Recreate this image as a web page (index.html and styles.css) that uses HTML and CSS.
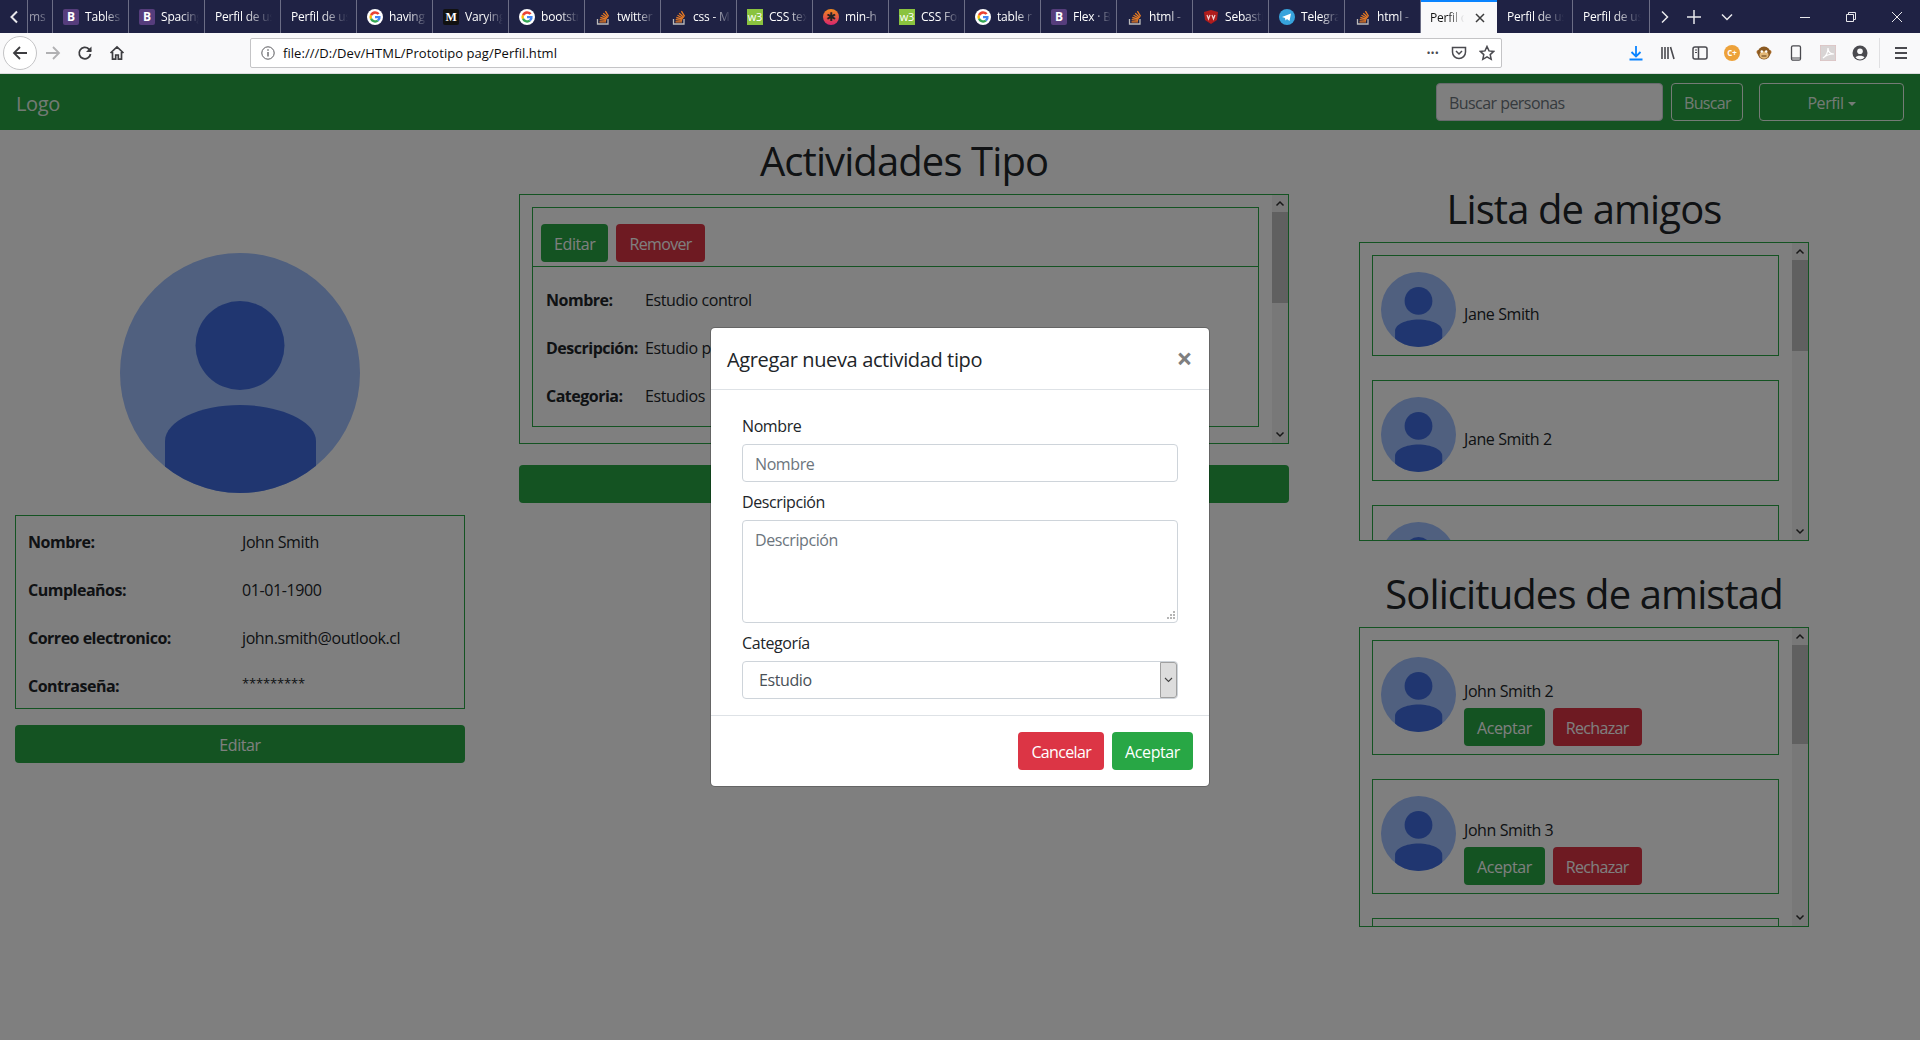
FILE: index.html
```html
<!DOCTYPE html>
<html lang="es">
<head>
    <meta charset="UTF-8">
    <title>Perfil de usuario</title>
    <link rel="stylesheet" href="styles.css">
</head>
<body>
    <svg class="svg-defs" aria-hidden="true">
        <defs>
            <clipPath id="avatar-clip"><circle cx="120" cy="120" r="120"/></clipPath>
            <symbol id="avatar" viewBox="0 0 240 240">
                <circle cx="120" cy="120" r="120" fill="#a0c0ff"/>
                <circle cx="120" cy="92.5" r="44.5" fill="#406de0"/>
                <path clip-path="url(#avatar-clip)" fill="#406de0" d="M45 240V188C45 168 80 152 120 152S196 168 196 188V240Z"/>
            </symbol>
            <symbol id="ic-g" viewBox="0 0 16 16">
                <circle cx="8" cy="8" r="8" fill="#fff"/>
                <path d="M12.6 4.6A5.7 5.7 0 0 0 3 5.4l2 1.5a3.3 3.3 0 0 1 5.4-1.1z" fill="#ea4335"/>
                <path d="M3 5.4a5.7 5.7 0 0 0 0 5.2l2-1.5a3.3 3.3 0 0 1 0-2.2z" fill="#fbbc05"/>
                <path d="M3 10.6a5.7 5.7 0 0 0 8.8 1.6l-1.9-1.5A3.3 3.3 0 0 1 5 9.1z" fill="#34a853"/>
                <path d="M13.6 7H8v2.3h3.2a2.8 2.8 0 0 1-1.3 1.4l1.9 1.5A5.6 5.6 0 0 0 13.6 7z" fill="#4285f4"/>
            </symbol>
            <symbol id="ic-so" viewBox="0 0 16 16">
                <path d="M2.5 10v5h10.5v-5" fill="none" stroke="#bcbbbb" stroke-width="1.3"/>
                <path d="M4.5 12.8h6.5M4.7 10.7l6.4.6M5.3 8.5l6.2 1.6M6.5 6.3l5.6 3M8.2 4.2l4.7 4.3M10.4 2.2l3.2 5.2" fill="none" stroke="#e87a23" stroke-width="1.3"/>
            </symbol>
        </defs>
    </svg>

    <div class="browser">
        <div class="tabstrip">
            <span class="strip-btn strip-btn-left">
                <svg width="10" height="14" viewBox="0 0 10 14"><path d="M8 1.5L2.5 7 8 12.5" fill="none" stroke="#e8e8ec" stroke-width="2"/></svg>
            </span>
            <div class="tab tab-cut"><span class="tab-title">ms</span></div>
            <div class="tab"><span class="fav fav-b">B</span><span class="tab-title">Tables</span></div>
            <div class="tab"><span class="fav fav-b">B</span><span class="tab-title">Spacing</span></div>
            <div class="tab"><span class="tab-title">Perfil de usuario</span></div>
            <div class="tab"><span class="tab-title">Perfil de usuario</span></div>
            <div class="tab"><svg class="fav"><use href="#ic-g"/></svg><span class="tab-title">having</span></div>
            <div class="tab"><span class="fav fav-m">M</span><span class="tab-title">Varying</span></div>
            <div class="tab"><svg class="fav"><use href="#ic-g"/></svg><span class="tab-title">bootstrap</span></div>
            <div class="tab"><svg class="fav"><use href="#ic-so"/></svg><span class="tab-title">twitter</span></div>
            <div class="tab"><svg class="fav"><use href="#ic-so"/></svg><span class="tab-title">css - Ma</span></div>
            <div class="tab"><span class="fav fav-w3">w3</span><span class="tab-title">CSS text</span></div>
            <div class="tab"><span class="fav fav-min">✱</span><span class="tab-title">min-h</span></div>
            <div class="tab"><span class="fav fav-w3">w3</span><span class="tab-title">CSS Fonts</span></div>
            <div class="tab"><svg class="fav"><use href="#ic-g"/></svg><span class="tab-title">table r</span></div>
            <div class="tab"><span class="fav fav-b">B</span><span class="tab-title">Flex · Bo</span></div>
            <div class="tab"><svg class="fav"><use href="#ic-so"/></svg><span class="tab-title">html - </span></div>
            <div class="tab"><svg class="fav" viewBox="0 0 16 16"><path d="M1 3l7-2 7 2-1 8-6 4-6-4z" fill="#b01c1c"/><path d="M4 6l1.500 4L7 6M9 6l1.500 4L12 6" fill="none" stroke="#f0d0d0" stroke-width="1.200"/></svg><span class="tab-title">Sebastian</span></div>
            <div class="tab"><svg class="fav" viewBox="0 0 16 16"><circle cx="8" cy="8" r="8" fill="#37a3dc"/><path d="M3 8l9-3.500-1.500 7.500-2.500-2-1.500 1.500-.5-2.500z" fill="#fff"/></svg><span class="tab-title">Telegram</span></div>
            <div class="tab"><svg class="fav"><use href="#ic-so"/></svg><span class="tab-title">html - </span></div>
            <div class="tab tab-active"><span class="tab-title">Perfil de usuario</span>
                <svg class="tab-close" width="10" height="10" viewBox="0 0 10 10"><path d="M1 1l8 8M9 1L1 9" stroke="#3c3c3c" stroke-width="1.500"/></svg>
            </div>
            <div class="tab"><span class="tab-title">Perfil de usuario</span></div>
            <div class="tab tab-last"><span class="tab-title">Perfil de usuario</span></div>
            <span class="strip-btn strip-btn-right">
                <svg width="10" height="14" viewBox="0 0 10 14"><path d="M2 1.500L7.500 7 2 12.500" fill="none" stroke="#e8e8ec" stroke-width="1.500"/></svg>
            </span>
            <span class="strip-btn strip-btn-new">
                <svg width="14" height="14" viewBox="0 0 14 14"><path d="M7 0v14M0 7h14" stroke="#e8e8ec" stroke-width="1.500"/></svg>
            </span>
            <span class="strip-btn strip-btn-list">
                <svg width="12" height="8" viewBox="0 0 12 8"><path d="M1 1.500L6 6.500l5-5" fill="none" stroke="#e8e8ec" stroke-width="1.500"/></svg>
            </span>
            <div class="win-controls">
                <svg width="10" height="10" viewBox="0 0 10 10"><path d="M0 5.500h10" stroke="#e8e8ec"/></svg>
                <svg width="10" height="10" viewBox="0 0 10 10"><path d="M.5 2.500h7v7h-7zM2.500 2.500v-2h7v7h-2" fill="none" stroke="#e8e8ec"/></svg>
                <svg width="10" height="10" viewBox="0 0 10 10"><path d="M0 0l10 10M10 0L0 10" stroke="#e8e8ec"/></svg>
            </div>
        </div>

        <div class="toolbar">
            <span class="back-btn">
                <svg width="16" height="16" viewBox="0 0 16 16"><path d="M15 8H2M8 2L2 8l6 6" fill="none" stroke="#3d3d40" stroke-width="1.800"/></svg>
            </span>
            <svg class="tool-ic tool-forward" viewBox="0 0 16 16"><path d="M1 8h13M8 2l6 6-6 6" fill="none" stroke="#b1b1b3" stroke-width="1.800"/></svg>
            <svg class="tool-ic tool-reload" viewBox="0 0 16 16"><path d="M13.500 9a5.700 5.700 0 1 1-1.700-5L14 6" fill="none" stroke="#3d3d40" stroke-width="1.800"/><path d="M14.500 1.500v5.500H9z" fill="#3d3d40"/></svg>
            <svg class="tool-ic tool-home" viewBox="0 0 16 16"><path d="M1.500 8L8 1.800 14.500 8M3.500 7v7.200h3.200V10h2.600v4.200h3.200V7" fill="none" stroke="#3d3d40" stroke-width="1.700"/></svg>
            <div class="urlbar">
                <svg class="url-info" viewBox="0 0 14 14"><circle cx="7" cy="7" r="6.200" fill="none" stroke="#5a5a5e"/><path d="M7 6v4.500M7 3.200v1.600" stroke="#5a5a5e" stroke-width="1.300"/></svg>
                <span class="url-text">file:///D:/Dev/HTML/Prototipo pag/Perfil.html</span>
                <span class="url-dots">•••</span>
                <svg class="tool-ic" viewBox="0 0 16 16"><path d="M1.500 2.500h13V7a6.500 6.500 0 0 1-13 0z" fill="none" stroke="#4a4a4f" stroke-width="1.500"/><path d="M5 6l3 3 3-3" fill="none" stroke="#4a4a4f" stroke-width="1.500"/></svg>
                <svg class="tool-ic url-star" viewBox="0 0 16 16"><path d="M8 1.500l2 4.400 4.700.5-3.500 3.200 1 4.700L8 11.900l-4.200 2.400 1-4.700L1.300 6.400 6 5.900z" fill="none" stroke="#4a4a4f" stroke-width="1.500"/></svg>
            </div>
            <div class="tool-right">
                <svg class="tool-ic" viewBox="0 0 16 16"><path d="M8 1v10M3.500 7L8 11.500 12.500 7M1.500 14.500h13" fill="none" stroke="#0a84ff" stroke-width="1.800"/></svg>
                <svg class="tool-ic" viewBox="0 0 16 16"><path d="M2 2v12M5 2v12M8 2v12M10.500 2l3.500 12" fill="none" stroke="#4a4a4f" stroke-width="1.600"/></svg>
                <svg class="tool-ic" viewBox="0 0 16 16"><rect x="1" y="2" width="14" height="12" rx="2" fill="none" stroke="#4a4a4f" stroke-width="1.500"/><path d="M6.500 2v12" stroke="#4a4a4f" stroke-width="1.500"/><path d="M3 5h2M3 7.500h2" stroke="#4a4a4f"/></svg>
                <span class="ext-cplus">C+</span>
                <svg class="tool-ic" viewBox="0 0 16 16"><circle cx="2.500" cy="7" r="2" fill="#b0702c"/><circle cx="13.500" cy="7" r="2" fill="#b0702c"/><circle cx="8" cy="8" r="6.500" fill="#8b5a22"/><ellipse cx="8" cy="10" rx="4.500" ry="3.800" fill="#e3b878"/><circle cx="5.800" cy="6.500" r="1.200" fill="#fff"/><circle cx="10.200" cy="6.500" r="1.200" fill="#fff"/><path d="M5.500 11h5" stroke="#5a3510"/></svg>
                <svg class="tool-ic" viewBox="0 0 16 16"><rect x="3.500" y=".8" width="9" height="14.400" rx="1.500" fill="none" stroke="#4a4a4f" stroke-width="1.300"/><path d="M3.500 13h9" stroke="#4a4a4f"/></svg>
                <svg class="tool-ic" viewBox="0 0 16 16"><rect width="16" height="16" fill="#d8d4d4" stroke="#e0bcbc"/><path d="M3 13c3-2 5-6 5-10 0 4 2 6 6 6-4 0-8 1-11 4z" fill="none" stroke="#fff" stroke-width="1.200"/></svg>
                <svg class="tool-ic" viewBox="0 0 16 16"><circle cx="8" cy="8" r="7.500" fill="#4a4a4f"/><circle cx="8" cy="6.300" r="2.800" fill="#f9f9fa"/><path d="M3.500 12.500c1-2.500 8-2.500 9 0a6 6 0 0 1-9 0z" fill="#f9f9fa"/></svg>
                <span class="tool-sep"></span>
                <svg class="tool-ic" viewBox="0 0 16 16"><path d="M2 3h12M2 8h12M2 13h12" stroke="#4a4a4f" stroke-width="1.800"/></svg>
            </div>
        </div>

        <div class="page">
            <nav class="navbar">
                <a class="brand">Logo</a>
                <input class="search-input" type="text" placeholder="Buscar personas">
                <button class="btn btn-ghost btn-search">Buscar</button>
                <button class="btn btn-ghost btn-profile">Perfil<span class="caret"></span></button>
            </nav>

            <div class="columns">
                <section class="col-left">
                    <svg class="avatar-big"><use href="#avatar"/></svg>
                    <div class="info-box">
                        <div class="info-row"><b>Nombre:</b><span>John Smith</span></div>
                        <div class="info-row"><b>Cumpleaños:</b><span>01-01-1900</span></div>
                        <div class="info-row"><b>Correo electronico:</b><span>john.smith@outlook.cl</span></div>
                        <div class="info-row"><b>Contraseña:</b><span class="info-pass">*********</span></div>
                    </div>
                    <button class="btn btn-green btn-wide">Editar</button>
                </section>

                <section class="col-center">
                    <h1>Actividades Tipo</h1>
                    <div class="scroll-box activity-box">
                        <div class="scroll-list">
                            <div class="activity">
                                <div class="activity-head">
                                    <button class="btn btn-green">Editar</button>
                                    <button class="btn btn-red">Remover</button>
                                </div>
                                <div class="activity-row"><b>Nombre:</b><span>Estudio control</span></div>
                                <div class="activity-row"><b>Descripción:</b><span>Estudio para control</span></div>
                                <div class="activity-row"><b>Categoria:</b><span>Estudios</span></div>
                            </div>
                        </div>
                        <div class="scrollbar">
                            <svg class="sb-arrow" viewBox="0 0 16 16"><path d="M4.500 10L8 6.500l3.500 3.500" fill="none" stroke="#303030" stroke-width="1.500"/></svg>
                            <div class="sb-track"><div class="sb-thumb thumb-activity"></div></div>
                            <svg class="sb-arrow" viewBox="0 0 16 16"><path d="M4.500 6L8 9.500 11.500 6" fill="none" stroke="#303030" stroke-width="1.500"/></svg>
                        </div>
                    </div>
                    <button class="btn btn-green btn-wide"></button>
                </section>

                <section class="col-right">
                    <h1>Lista de amigos</h1>
                    <div class="scroll-box friends-box">
                        <div class="scroll-list">
                            <div class="person">
                                <svg class="avatar-small"><use href="#avatar"/></svg>
                                <div class="friend-name">Jane Smith</div>
                            </div>
                            <div class="person">
                                <svg class="avatar-small"><use href="#avatar"/></svg>
                                <div class="friend-name">Jane Smith 2</div>
                            </div>
                            <div class="person">
                                <svg class="avatar-small"><use href="#avatar"/></svg>
                            </div>
                        </div>
                        <div class="scrollbar">
                            <svg class="sb-arrow" viewBox="0 0 16 16"><path d="M4.500 10L8 6.500l3.500 3.500" fill="none" stroke="#303030" stroke-width="1.500"/></svg>
                            <div class="sb-track"><div class="sb-thumb thumb-friends"></div></div>
                            <svg class="sb-arrow" viewBox="0 0 16 16"><path d="M4.500 6L8 9.500 11.500 6" fill="none" stroke="#303030" stroke-width="1.500"/></svg>
                        </div>
                    </div>

                    <h1 class="title-requests">Solicitudes de amistad</h1>
                    <div class="scroll-box requests-box">
                        <div class="scroll-list">
                            <div class="person">
                                <svg class="avatar-small"><use href="#avatar"/></svg>
                                <div class="request-info">
                                    <div class="request-name">John Smith 2</div>
                                    <button class="btn btn-green">Aceptar</button>
                                    <button class="btn btn-red">Rechazar</button>
                                </div>
                            </div>
                            <div class="person">
                                <svg class="avatar-small"><use href="#avatar"/></svg>
                                <div class="request-info">
                                    <div class="request-name">John Smith 3</div>
                                    <button class="btn btn-green">Aceptar</button>
                                    <button class="btn btn-red">Rechazar</button>
                                </div>
                            </div>
                            <div class="person">
                                <svg class="avatar-small"><use href="#avatar"/></svg>
                            </div>
                        </div>
                        <div class="scrollbar">
                            <svg class="sb-arrow" viewBox="0 0 16 16"><path d="M4.500 10L8 6.500l3.500 3.500" fill="none" stroke="#303030" stroke-width="1.500"/></svg>
                            <div class="sb-track"><div class="sb-thumb thumb-requests"></div></div>
                            <svg class="sb-arrow" viewBox="0 0 16 16"><path d="M4.500 6L8 9.500 11.500 6" fill="none" stroke="#303030" stroke-width="1.500"/></svg>
                        </div>
                    </div>
                </section>
            </div>

            <div class="backdrop"></div>

            <div class="modal">
                <div class="modal-header">
                    <h5>Agregar nueva actividad tipo</h5>
                    <span class="modal-close">×</span>
                </div>
                <div class="modal-body">
                    <label>Nombre</label>
                    <input class="field" type="text" placeholder="Nombre">
                    <label>Descripción</label>
                    <div class="area-wrap">
                        <textarea class="field field-area" placeholder="Descripción"></textarea>
                        <svg class="area-grip" width="9" height="9" viewBox="0 0 9 9"><path d="M7 0h2v2H7zM4 3h2v2H4zM7 3h2v2H7zM1 6h2v2H1zM4 6h2v2H4zM7 6h2v2H7z" fill="#b5b5b5"/></svg>
                    </div>
                    <label>Categoría</label>
                    <div class="select-wrap">
                        <select class="field field-select"><option>Estudio</option></select>
                        <span class="select-arrow">
                            <svg width="9" height="6" viewBox="0 0 9 6"><path d="M1 1l3.500 3.500L8 1" fill="none" stroke="#444" stroke-width="1.100"/></svg>
                        </span>
                    </div>
                </div>
                <div class="modal-footer">
                    <button class="btn btn-red">Cancelar</button>
                    <button class="btn btn-green">Aceptar</button>
                </div>
            </div>
        </div>
    </div>
</body>
</html>
```
FILE: styles.css
```css
* {
    box-sizing: border-box;
}
body {
    margin: 0;
    overflow: hidden;
    font-family: "Open Sans", "Noto Sans", sans-serif;
    font-size: 16px;
    line-height: 24px;
    letter-spacing: -0.4px;
    color: #212529;
    background-color: #fff;
}
b {
    letter-spacing: -0.5px;
}
.svg-defs {
    position: absolute;
    width: 0;
    height: 0;
}
.browser {
    display: flex;
    flex-direction: column;
    height: 100vh;
}

/* tab strip */
.tabstrip {
    display: flex;
    align-items: stretch;
    flex: none;
    height: 33px;
    background-color: #1f2244;
    color: #fff;
}
.strip-btn {
    display: flex;
    align-items: center;
    justify-content: center;
    flex: none;
}
.strip-btn-left {
    width: 27px;
}
.strip-btn-right {
    width: 29px;
}
.strip-btn-new {
    width: 30px;
}
.strip-btn-list {
    width: 36px;
}
.tab {
    display: flex;
    align-items: center;
    flex: none;
    gap: 6px;
    width: 76px;
    height: 33px;
    padding-left: 10px;
    border-right: 1px solid #6b6d85;
    font-size: 12px;
    letter-spacing: -0.2px;
}
.tab-cut {
    width: 26px;
    padding-left: 1px;
    border-left: 1px solid #6b6d85;
}
.tab-title {
    flex: 1;
    min-width: 0;
    overflow: hidden;
    white-space: nowrap;
    padding-right: 6px;
    -webkit-mask-image: linear-gradient(to right, #000 45%, transparent 88%);
    mask-image: linear-gradient(to right, #000 45%, transparent 88%);
}
.tab-cut .tab-title {
    color: #9a9bab;
}
.tab-active {
    padding: 0 12px 0 9px;
    border-right: 0;
    border-top: 2px solid #0a84ff;
    background-color: #f9f9fa;
    color: #111;
}
.tab-last {
    width: 77px;
}
.tab-close {
    flex: none;
}
.fav {
    display: flex;
    align-items: center;
    justify-content: center;
    flex: none;
    width: 16px;
    height: 16px;
    border-radius: 2px;
}
.fav-b {
    background-color: #563d7c;
    font-size: 12px;
    font-weight: 700;
}
.fav-m {
    background-color: #111;
    font-family: "Liberation Serif", serif;
    font-size: 12px;
    font-weight: 700;
}
.fav-w3 {
    background-color: #8ac33f;
    font-size: 11px;
    border-radius: 0;
}
.fav-min {
    background: linear-gradient(#f08a1c, #d9246e);
    border-radius: 50%;
    color: #222;
    font-size: 12px;
}
.win-controls {
    display: flex;
    align-items: center;
    gap: 36px;
    margin-left: auto;
    padding-right: 18px;
}

/* toolbar */
.toolbar {
    display: flex;
    align-items: center;
    flex: none;
    height: 41px;
    background-color: #f9f9fa;
    border-bottom: 1px solid #dcdcde;
}
.tool-ic {
    flex: none;
    width: 16px;
    height: 16px;
}
.back-btn {
    display: flex;
    align-items: center;
    justify-content: center;
    flex: none;
    width: 34px;
    height: 34px;
    margin-left: 3px;
    border: 1px solid #c4c4c6;
    border-radius: 50%;
    background-color: #fff;
}
.tool-forward {
    margin-left: 8px;
}
.tool-reload {
    margin-left: 16px;
}
.tool-home {
    margin-left: 16px;
}
.urlbar {
    display: flex;
    align-items: center;
    flex: none;
    width: 1252px;
    height: 30px;
    margin-left: 125px;
    padding: 0 6px 0 10px;
    background-color: #fff;
    border: 1px solid #c4c4c6;
    border-radius: 2px;
    font-size: 13px;
    letter-spacing: 0.05px;
    color: #0c0c0d;
}
.url-info {
    width: 14px;
    height: 14px;
    margin-right: 8px;
}
.url-text {
    flex: 1;
}
.url-dots {
    margin-right: 12px;
    font-size: 11px;
    color: #4a4a4f;
}
.url-star {
    margin-left: 12px;
}
.tool-right {
    display: flex;
    align-items: center;
    flex: 1;
    justify-content: flex-end;
    gap: 16px;
    padding-right: 11px;
}
.ext-cplus {
    display: flex;
    align-items: center;
    justify-content: center;
    flex: none;
    width: 16px;
    height: 16px;
    border-radius: 50%;
    background-color: #eda23a;
    color: #fff;
    font-size: 8px;
    font-weight: 700;
    letter-spacing: 0;
}
.tool-sep {
    width: 1px;
    height: 30px;
    margin: 0 -3px 0 -5px;
    background-color: #e0e0e2;
}

/* page */
.page {
    position: relative;
    flex: 1;
    overflow: hidden;
}
.navbar {
    display: flex;
    align-items: center;
    height: 56px;
    padding: 0 16px;
    background-color: #28a745;
}
.brand {
    margin-right: auto;
    padding-top: 4px;
    font-size: 20px;
    color: rgba(255, 255, 255, 0.9);
}
.search-input {
    width: 227px;
    height: 38px;
    padding: 8px 12px 6px;
    border: 1px solid #ced4da;
    border-radius: 4px;
    background-color: #fff;
    font: inherit;
    letter-spacing: -0.55px;
    outline: none;
}
.search-input::placeholder,
.field::placeholder {
    color: #6c757d;
    opacity: 1;
}
.btn {
    height: 38px;
    padding: 2px 12px 0;
    border: 1px solid transparent;
    border-radius: 4px;
    font: inherit;
    letter-spacing: inherit;
    color: #fff;
    white-space: nowrap;
}
.btn-ghost {
    border-color: rgba(255, 255, 255, 0.9);
    background-color: transparent;
    color: rgba(255, 255, 255, 0.9);
}
.btn-search {
    width: 72px;
    margin-left: 8px;
    letter-spacing: -0.65px;
}
.btn-profile {
    width: 145px;
    margin-left: 16px;
}
.caret {
    display: inline-block;
    margin-left: 4px;
    vertical-align: 3px;
    border-top: 4px solid;
    border-left: 4px solid transparent;
    border-right: 4px solid transparent;
}
.btn-green {
    background-color: #28a745;
}
.btn-red {
    background-color: #dc3545;
    letter-spacing: -0.65px;
}
.btn-wide {
    display: block;
    width: 100%;
}
h1 {
    height: 48px;
    margin: 0 0 8px;
    font-size: 40px;
    font-weight: 400;
    line-height: 46px;
    text-align: center;
    letter-spacing: -0.9px;
}

/* columns */
.columns {
    display: flex;
    align-items: flex-start;
}
.col-left {
    flex: none;
    width: 450px;
    margin: 123px 0 0 15px;
    text-align: center;
}
.col-center {
    flex: none;
    width: 770px;
    margin: 8px 0 0 54px;
}
.col-right {
    flex: none;
    width: 450px;
    margin: 56px 0 0 70px;
}
.avatar-big {
    display: block;
    width: 240px;
    height: 240px;
    margin: 0 auto 22px;
}
.info-box {
    height: 194px;
    margin-bottom: 16px;
    padding: 14px 12px 0;
    border: 1px solid #28a745;
    text-align: left;
}
.info-row {
    display: flex;
    margin-bottom: 24px;
}
.info-row b {
    flex: none;
    width: 214px;
}
.info-pass {
    font-size: 13px;
    line-height: 18px;
    letter-spacing: -0.15px;
}

/* scroll boxes */
.scroll-box {
    display: flex;
    border: 1px solid #28a745;
    overflow: hidden;
}
.activity-box {
    height: 250px;
    margin-bottom: 21px;
}
.friends-box {
    height: 299px;
}
.requests-box {
    height: 300px;
}
.title-requests {
    margin-top: 30px;
}
.scroll-list {
    flex: 1;
    min-width: 0;
    padding: 12px 13px 0 12px;
    overflow: hidden;
}
.scrollbar {
    display: flex;
    flex-direction: column;
    flex: none;
    width: 16px;
    background-color: #f1f1f1;
}
.sb-arrow {
    flex: none;
    width: 16px;
    height: 17px;
}
.sb-track {
    flex: 1;
}
.sb-thumb {
    background-color: #c1c1c1;
}
.thumb-activity {
    height: 91px;
}
.thumb-friends {
    height: 91px;
}
.thumb-requests {
    height: 99px;
}
.activity {
    height: 220px;
    border: 1px solid #28a745;
}
.activity-head {
    display: flex;
    gap: 8px;
    height: 59px;
    padding: 16px 8px 4px;
    margin-bottom: 21px;
    border-bottom: 1px solid #28a745;
}
.activity-row {
    display: flex;
    margin-bottom: 24px;
    padding-left: 13px;
}
.activity-row b {
    flex: none;
    width: 99px;
}
.person {
    display: flex;
    gap: 8px;
    margin-bottom: 24px;
    padding: 16px 8px 8px;
    border: 1px solid #28a745;
}
.avatar-small {
    flex: none;
    width: 75px;
    height: 75px;
}
.friend-name {
    margin-top: 30px;
}
.request-info {
    margin-top: 22px;
}
.request-name {
    margin-bottom: 5px;
}
.request-info .btn + .btn {
    margin-left: 4px;
}

/* modal */
.backdrop {
    position: absolute;
    inset: 0;
    background-color: rgba(0, 0, 0, 0.5);
}
.modal {
    position: absolute;
    top: 253px;
    left: 710px;
    width: 500px;
    border: 1px solid rgba(0, 0, 0, 0.2);
    border-radius: 5px;
    background-color: #fff;
    background-clip: padding-box;
}
.modal-header {
    display: flex;
    align-items: center;
    justify-content: space-between;
    height: 62px;
    padding: 2px 17px 0 16px;
    border-bottom: 1px solid #dee2e6;
}
.modal-header h5 {
    margin: 0;
    font-size: 20px;
    font-weight: 400;
    line-height: 30px;
    letter-spacing: -0.37px;
}
.modal-close {
    margin-top: -3px;
    font-size: 28px;
    font-weight: 700;
    color: #7f7f7f;
}
.modal-body {
    display: flex;
    flex-direction: column;
    padding: 22px 31px 16px;
}
.modal-body label {
    margin-bottom: 6px;
    padding-top: 2px;
}
.field {
    display: block;
    width: 100%;
    height: 38px;
    margin-bottom: 6px;
    padding: 8px 12px 6px;
    border: 1px solid #ced4da;
    border-radius: 4px;
    background-color: #fff;
    font: inherit;
    letter-spacing: inherit;
    color: #495057;
    outline: none;
}
.area-wrap {
    position: relative;
}
.field-area {
    height: 103px;
    padding-top: 7px;
    resize: none;
}
.area-grip {
    position: absolute;
    right: 3px;
    bottom: 9px;
}
.select-wrap {
    position: relative;
}
.field-select {
    margin-bottom: 0;
    padding: 6px 12px 6px 16px;
    appearance: none;
}
.select-arrow {
    position: absolute;
    top: 1px;
    right: 1px;
    display: flex;
    align-items: center;
    justify-content: center;
    width: 17px;
    height: 36px;
    border: 1px solid #a0a0a0;
    border-radius: 0 3px 3px 0;
    background-color: #ddd;
}
.modal-footer {
    display: flex;
    justify-content: flex-end;
    gap: 8px;
    padding: 16px;
    border-top: 1px solid #dee2e6;
}
```
